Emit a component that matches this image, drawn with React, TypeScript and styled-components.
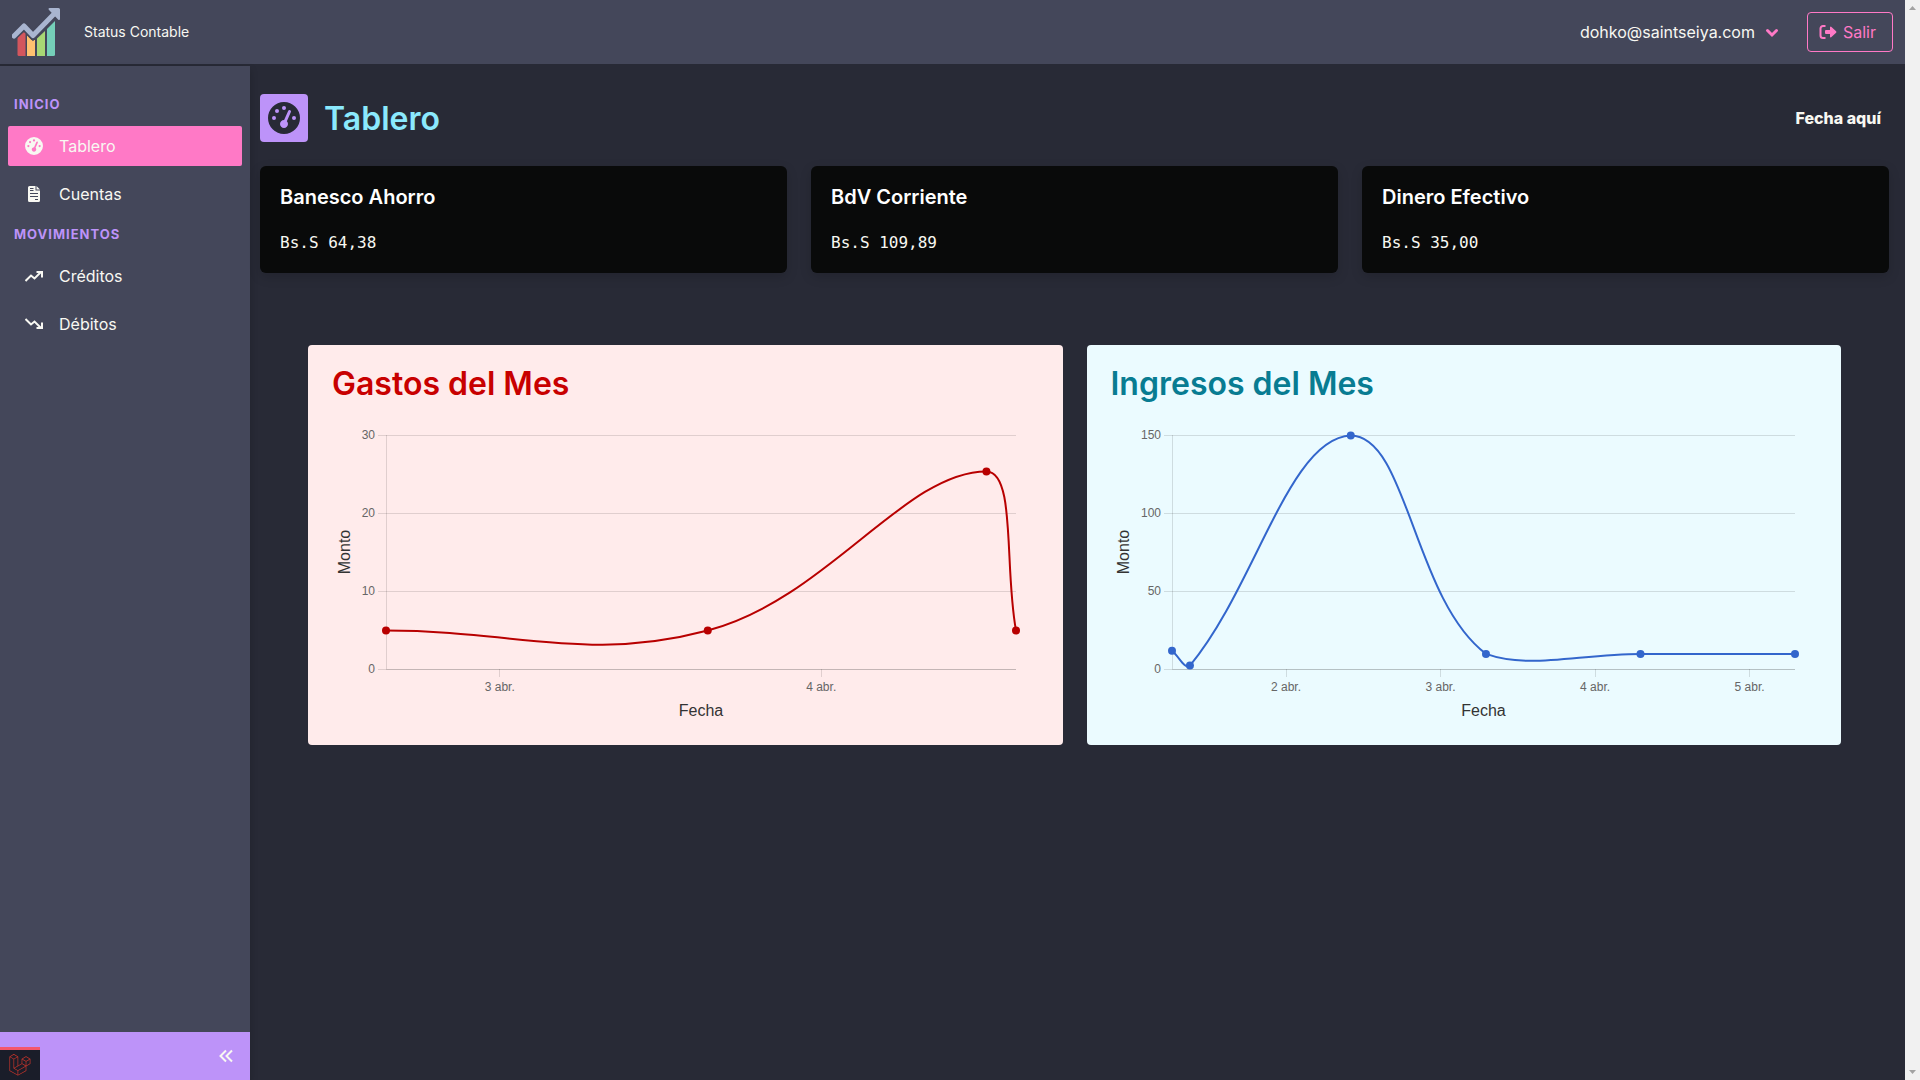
import React, { useLayoutEffect, useRef, useState } from "react";
import styled, { createGlobalStyle } from "styled-components";

const GlobalStyle = createGlobalStyle`
  *, *::before, *::after { box-sizing: border-box; }
  html, body { margin: 0; background: #282a36; }
  body { font-family: Inter, "Open Sans", sans-serif; font-size: 16px; line-height: 24px; color: #f8f8f2; }
  h1, h2, h3, p { margin: 0; }
  button { font: inherit; color: inherit; background: none; border: 0; padding: 0; cursor: pointer; }
  a { color: inherit; text-decoration: none; }
  svg { display: block; }
`;

const Screen = styled.div`
  display: flex;
  min-height: 100vh;
`;

const Page = styled.div`
  flex: 1;
  min-width: 0;
  display: flex;
  flex-direction: column;
`;

const Header = styled.header`
  display: flex;
  align-items: center;
  justify-content: space-between;
  height: 64px;
  padding: 0 12px;
  background: #44475a;
`;

const Brand = styled.a`
  display: flex;
  align-items: center;
  gap: 24px;
  font-size: 14px;
  line-height: 20px;
`;

const Account = styled.div`
  display: flex;
  align-items: center;
  gap: 28px;
`;

const UserButton = styled.button`
  display: flex;
  align-items: center;
  gap: 10px;
  svg { color: #ff79c6; }
`;

const LogoutButton = styled.button`
  display: flex;
  align-items: center;
  gap: 6px;
  height: 40px;
  padding: 0 16px 0 11px;
  border: 1px solid #ff79c6;
  border-radius: 4px;
  color: #ff79c6;
`;

const Body = styled.div`
  flex: 1;
  display: flex;
`;

const Sidebar = styled.aside`
  width: 250px;
  flex-shrink: 0;
  margin-top: 2px;
  display: flex;
  flex-direction: column;
  background: #44475a;
  box-shadow: 0 4px 8px rgba(0, 0, 0, 0.2);
`;

const Nav = styled.nav`
  flex: 1;
  padding: 18px 8px;
`;

const NavLabel = styled.h3`
  padding: 10px 6px 12px;
  font-size: 13px;
  line-height: 20px;
  font-weight: 700;
  letter-spacing: 1px;
  text-transform: uppercase;
  color: #bd93f9;
`;

const NavList = styled.ul`
  display: flex;
  flex-direction: column;
  gap: 8px;
  margin: 0;
  padding: 0;
  list-style: none;
`;

const NavLink = styled.a<{ $active?: boolean }>`
  display: flex;
  align-items: center;
  gap: 16px;
  height: 40px;
  padding: 0 17px;
  border-radius: 2px;
  background: ${(p) => (p.$active ? "#ff79c6" : "transparent")};
`;

const SidebarFooter = styled.div`
  position: relative;
  display: flex;
  align-items: center;
  justify-content: flex-end;
  height: 48px;
  padding: 0 14px;
  background: #bd93f9;
`;

const DebugBadge = styled.button`
  position: absolute;
  left: 0;
  bottom: 0;
  display: flex;
  align-items: center;
  justify-content: center;
  width: 40px;
  height: 33px;
  border-top: 3px solid #f4576b;
  background: #1a1d29;
`;

const Main = styled.main`
  flex: 1;
  min-width: 0;
  padding: 30px 16px 0 10px;
`;

const TitleBar = styled.div`
  display: flex;
  align-items: center;
  gap: 16px;
  margin-bottom: 24px;
`;

const TitleIcon = styled.div`
  display: flex;
  align-items: center;
  justify-content: center;
  width: 48px;
  height: 48px;
  border-radius: 4px;
  background: #bd93f9;
  color: #282a36;
`;

const Title = styled.h1`
  flex: 1;
  padding-top: 2px;
  font-size: 32px;
  line-height: 46px;
  font-weight: 600;
  color: #8be9fd;
`;

const DateText = styled.strong`
  padding-right: 8px;
  font-weight: 800;
`;

const Cards = styled.section`
  display: grid;
  grid-template-columns: repeat(3, 1fr);
  gap: 24px;
`;

const Card = styled.article`
  padding: 17px 20px 18px;
  border-radius: 6px;
  background: #090a0a;
  box-shadow: 0 4px 12px rgba(0, 0, 0, 0.15);
`;

const CardTitle = styled.h2`
  margin-bottom: 20px;
  font-size: 20px;
  line-height: 28px;
  font-weight: 600;
  color: #fff;
`;

const Amount = styled.p`
  font-family: "DejaVu Sans Mono", monospace;
`;

const Charts = styled.section`
  display: grid;
  grid-template-columns: repeat(2, 1fr);
  gap: 24px;
  margin-top: 72px;
  padding: 0 48px;
`;

const Panel = styled.article<{ $background: string }>`
  min-width: 0;
  height: 400px;
  padding: 16px 24px 14px;
  border-radius: 4px;
  background: ${(p) => p.$background};
`;

const PanelTitle = styled.h2<{ $color: string }>`
  font-size: 32px;
  line-height: 46px;
  font-weight: 600;
  color: ${(p) => p.$color};
`;

const Plot = styled.svg`
  width: 100%;
  height: 324px;
  overflow: visible;
  font-family: "Liberation Sans", Arial, sans-serif;
`;

const TickText = styled.text`
  font-size: 12px;
  fill: #666;
`;

const AxisText = styled.text`
  font-size: 16px;
  fill: #333;
  text-anchor: middle;
`;

const ScrollTrack = styled.div`
  display: flex;
  flex-direction: column;
  justify-content: space-between;
  align-items: center;
  width: 15px;
  padding: 6px 0;
  background: #f1f1f1;
`;

type Point = { x: number; y: number };

type ChartData = {
  title: string;
  background: string;
  titleColor: string;
  lineColor: string;
  axisLeft: number;
  yTicks: number[];
  xTicks: number[];
  /** [day of April, amount] */
  values: [number, number][];
};

const TOP = 28;
const BOTTOM = 262;
const TENSION = 0.4;

function splinePath(points: Point[], left: number, right: number) {
  const clamp = (v: number, a: number, b: number) => Math.max(a, Math.min(b, v));
  const controls = points.map((cur, i) => {
    const prev = points[i - 1] ?? cur;
    const next = points[i + 1] ?? cur;
    const before = Math.hypot(cur.x - prev.x, cur.y - prev.y);
    const after = Math.hypot(next.x - cur.x, next.y - cur.y);
    const a = (TENSION * before) / (before + after);
    const b = (TENSION * after) / (before + after);
    const fit = (p: Point) => ({ x: clamp(p.x, left, right), y: clamp(p.y, TOP, BOTTOM) });
    return {
      back: fit({ x: cur.x - a * (next.x - prev.x), y: cur.y - a * (next.y - prev.y) }),
      ahead: fit({ x: cur.x + b * (next.x - prev.x), y: cur.y + b * (next.y - prev.y) }),
    };
  });
  return points
    .map((p, i) =>
      i === 0
        ? `M${p.x} ${p.y}`
        : `C${controls[i - 1].ahead.x} ${controls[i - 1].ahead.y} ${controls[i].back.x} ${controls[i].back.y} ${p.x} ${p.y}`
    )
    .join(" ");
}

function LineChart({ data }: { data: ChartData }) {
  const ref = useRef<SVGSVGElement>(null);
  const [width, setWidth] = useState(706);

  useLayoutEffect(() => {
    const node = ref.current;
    if (!node) return;
    const measure = () => setWidth(Math.round(node.getBoundingClientRect().width));
    measure();
    const observer = new ResizeObserver(measure);
    observer.observe(node);
    return () => observer.disconnect();
  }, []);

  const left = data.axisLeft;
  const right = width - 23;
  const firstDay = data.values[0][0];
  const lastDay = data.values[data.values.length - 1][0];
  const maxY = data.yTicks[data.yTicks.length - 1];
  const scaleX = (d: number) => left + ((d - firstDay) / (lastDay - firstDay)) * (right - left);
  const scaleY = (v: number) => BOTTOM - (v / maxY) * (BOTTOM - TOP);
  const points = data.values.map(([d, v]) => ({ x: scaleX(d), y: scaleY(v) }));
  const middle = (left + right) / 2;

  return (
    <Plot ref={ref} role="img" aria-label={data.title}>
      <g stroke="#000" strokeOpacity={0.12} shapeRendering="crispEdges">
        <line x1={left} x2={left} y1={TOP} y2={BOTTOM} />
        {data.yTicks.map((t) => (
          <line key={t} x1={left - 8} x2={right} y1={scaleY(t)} y2={scaleY(t)} />
        ))}
        <line x1={left} x2={right} y1={BOTTOM} y2={BOTTOM} />
        {data.xTicks.map((t) => (
          <line key={t} x1={scaleX(t)} x2={scaleX(t)} y1={BOTTOM} y2={BOTTOM + 8} />
        ))}
      </g>
      {data.yTicks.map((t) => (
        <TickText key={t} x={left - 11} y={scaleY(t) + 4} textAnchor="end">
          {t}
        </TickText>
      ))}
      {data.xTicks.map((t) => (
        <TickText key={t} x={scaleX(t)} y={BOTTOM + 22} textAnchor="middle">
          {`${t} abr.`}
        </TickText>
      ))}
      <AxisText x={middle} y={BOTTOM + 47}>
        Fecha
      </AxisText>
      <AxisText transform={`translate(18 ${(TOP + BOTTOM) / 2}) rotate(-90)`}>Monto</AxisText>
      <g transform="translate(0 0.5)">
        <path d={splinePath(points, left, right)} fill="none" stroke={data.lineColor} strokeWidth={2} />
        {points.map((p, i) => (
          <circle key={i} cx={p.x} cy={p.y} r={4} fill={data.lineColor} />
        ))}
      </g>
    </Plot>
  );
}

function LogoIcon() {
  return (
    <svg width="48" height="48" viewBox="0 0 48 48" aria-hidden="true">
      <path d="M5.500 29.500L12 24l1.500 1.500V48H7a1.500 1.500 0 0 1-1.500-1.500z" fill="#d3565d" />
      <path d="M15 27.500L19.500 32H23V48H15z" fill="#ffc170" />
      <path d="M25 30.500L33 23V48H25z" fill="#a8d774" />
      <path d="M35 21L43 13V46.500a1.500 1.500 0 0 1-1.500 1.500H35z" fill="#75cfb8" />
      <path d="M2 28L12 18L21 27.500L42 6" fill="none" stroke="#44475a" strokeWidth="8" />
      <path d="M2 28L12 18L21 27.500L42 6" fill="none" stroke="#a9b5d0" strokeWidth="5" strokeLinecap="round" strokeLinejoin="round" />
      <path d="M37.500 0H46.500a1.500 1.500 0 0 1 1.500 1.500V11a1 1 0 0 1-1.700.7L36.800 1.700A1 1 0 0 1 37.500 0z" fill="#a9b5d0" />
    </svg>
  );
}

function GaugeIcon({ size }: { size: number }) {
  return (
    <svg width={size} height={size} viewBox="0 0 512 512" fill="currentColor" aria-hidden="true">
      <path d="M0 256a256 256 0 1 1 512 0A256 256 0 1 1 0 256zM288 96a32 32 0 1 0-64 0 32 32 0 1 0 64 0zM256 416c35.300 0 64-28.700 64-64c0-17.400-6.900-33.100-18.100-44.600L366 161.700c5.300-12.100-.2-26.300-12.300-31.600s-26.300 .2-31.600 12.300L257.900 288c-.6 0-1.300 0-1.900 0c-35.300 0-64 28.700-64 64s28.700 64 64 64zM176 144a32 32 0 1 0-64 0 32 32 0 1 0 64 0zM96 288a32 32 0 1 0 0-64 32 32 0 1 0 0 64zm352-32a32 32 0 1 0-64 0 32 32 0 1 0 64 0z" />
    </svg>
  );
}

function InvoiceIcon() {
  return (
    <svg width="18" height="16" viewBox="0 0 18 16" aria-hidden="true">
      <path d="M4.500 0H10.500V4.500H15V14.500A1.500 1.500 0 0 1 13.500 16h-9A1.500 1.500 0 0 1 3 14.500v-13A1.500 1.500 0 0 1 4.500 0zM11.500 0L15 3.500H11.500z" fill="currentColor" />
      <path d="M5 2.500h3.500M5 4.500h3.500M5 7.500h8M5 10.500h8M10 13.500h3" stroke="#44475a" fill="none" />
    </svg>
  );
}

function TrendIcon({ down }: { down?: boolean }) {
  return (
    <svg width="18" height="18" viewBox="0 0 18 18" fill="none" stroke="currentColor" strokeWidth="2" aria-hidden="true">
      {down ? <path d="M.5 4L6 9.500L9.500 6.500L16 13M11.500 13H17V7.500" /> : <path d="M.5 14L6 8.500L9.500 11.500L16 5M11.500 5H17V10.500" />}
    </svg>
  );
}

function ChevronIcon() {
  return (
    <svg width="14" height="14" viewBox="0 0 14 14" fill="none" stroke="currentColor" strokeWidth="3" strokeLinecap="round" aria-hidden="true">
      <path d="M2.500 5.500L7 10l4.500-4.500" />
    </svg>
  );
}

function LogoutIcon() {
  return (
    <svg width="18" height="16" viewBox="0 0 18 16" aria-hidden="true">
      <path d="M6.500 2H4a2.500 2.500 0 0 0-2.500 2.500v7A2.500 2.500 0 0 0 4 14h2.500" fill="none" stroke="currentColor" strokeWidth="2" />
      <path d="M11 3.300a.7.7 0 0 1 1.200-.5l4.900 4.500a1 1 0 0 1 0 1.400l-4.900 4.500a.7.7 0 0 1-1.200-.5V10H7a1 1 0 0 1-1-1V7a1 1 0 0 1 1-1h4z" fill="currentColor" />
    </svg>
  );
}

function CollapseIcon() {
  return (
    <svg width="20" height="20" viewBox="0 0 20 20" fill="none" stroke="#f8f8f2" strokeWidth="2" aria-hidden="true">
      <path d="M10 4.500L4.500 10l5.500 5.500M16 4.500L10.500 10l5.500 5.500" />
    </svg>
  );
}

function LaravelIcon() {
  return (
    <svg width="22" height="22" viewBox="0 0 50 52" fill="#c8352b" aria-hidden="true">
      <path d="M49.626 11.564a.809.809 0 0 1 .028.209v10.972a.8.800 0 0 1-.402.694l-9.209 5.302V39.250c0 .286-.152.550-.4.694L20.420 51.010c-.044.025-.092.041-.14.058a.805.805 0 0 1-.41 0c-.063-.022-.12-.04-.175-.070L.402 39.944A.801.801 0 0 1 0 39.250V6.334c0-.072.010-.142.028-.21.080-.250.200-.390.370-.490L10.010.100a.802.802 0 0 1 .800 0l9.610 5.540c.250.140.400.400.402.694v20.559l8.008-4.611V11.773c0-.270.150-.550.402-.694l9.610-5.534a.802.802 0 0 1 .800 0l9.610 5.533c.190.110.320.280.374.486zm-1.574 10.718v-9.124l-3.363 1.936-4.646 2.675v9.124l8.010-4.611zm-9.610 16.505v-9.130l-4.570 2.610-13.050 7.448v9.216l17.620-10.144zM1.602 7.719v31.068L19.220 48.930v-9.214l-9.204-5.209c-.250-.150-.410-.400-.410-.704V12.330L4.965 9.654 1.602 7.720zm8.810-5.994L2.405 6.334l8.005 4.609 8.006-4.610-8.006-4.608zm4.164 28.764l4.645-2.674V7.719l-3.363 1.936-4.646 2.675v20.096l3.364-1.937zM39.243 7.164l-8.006 4.609 8.006 4.609 8.005-4.610-8.005-4.608zm-.801 10.605l-4.646-2.675-3.363-1.936v9.124l4.645 2.674 3.364 1.937v-9.124zM20.020 38.330l11.743-6.704 5.870-3.350-8-4.606-9.211 5.303-8.395 4.833 7.993 4.524z" />
    </svg>
  );
}

const accounts = [
  { name: "Banesco Ahorro", amount: "Bs.S 64,38" },
  { name: "BdV Corriente", amount: "Bs.S 109,89" },
  { name: "Dinero Efectivo", amount: "Bs.S 35,00" },
];

const menu = [
  {
    label: "Inicio",
    items: [
      { text: "Tablero", icon: <GaugeIcon size={18} />, active: true },
      { text: "Cuentas", icon: <InvoiceIcon />, active: false },
    ],
  },
  {
    label: "Movimientos",
    items: [
      { text: "Créditos", icon: <TrendIcon />, active: false },
      { text: "Débitos", icon: <TrendIcon down />, active: false },
    ],
  },
];

const charts: ChartData[] = [
  {
    title: "Gastos del Mes",
    background: "#ffebeb",
    titleColor: "#c80000",
    lineColor: "#b80000",
    axisLeft: 54,
    yTicks: [0, 10, 20, 30],
    xTicks: [3, 4],
    values: [[2.646, 5], [3.647, 5], [4.514, 25.4], [4.606, 5]],
  },
  {
    title: "Ingresos del Mes",
    background: "#ebfbff",
    titleColor: "#087c92",
    lineColor: "#3366cc",
    axisLeft: 61,
    yTicks: [0, 50, 100, 150],
    xTicks: [2, 3, 4, 5],
    values: [[1.262, 12], [1.378, 2.5], [2.419, 150], [3.294, 10], [4.294, 10], [5.294, 10]],
  },
];

export default function App() {
  return (
    <>
      <GlobalStyle />
      <Screen>
        <Page>
          <Header>
            <Brand href="#">
              <LogoIcon />
              Status Contable
            </Brand>
            <Account>
              <UserButton type="button">
                dohko@saintseiya.com
                <ChevronIcon />
              </UserButton>
              <LogoutButton type="button">
                <LogoutIcon />
                Salir
              </LogoutButton>
            </Account>
          </Header>
          <Body>
            <Sidebar>
              <Nav>
                {menu.map((group) => (
                  <React.Fragment key={group.label}>
                    <NavLabel>{group.label}</NavLabel>
                    <NavList>
                      {group.items.map((item) => (
                        <li key={item.text}>
                          <NavLink href="#" $active={item.active}>
                            {item.icon}
                            {item.text}
                          </NavLink>
                        </li>
                      ))}
                    </NavList>
                  </React.Fragment>
                ))}
              </Nav>
              <SidebarFooter>
                <DebugBadge type="button" aria-label="Laravel">
                  <LaravelIcon />
                </DebugBadge>
                <button type="button" aria-label="Contraer menú">
                  <CollapseIcon />
                </button>
              </SidebarFooter>
            </Sidebar>
            <Main>
              <TitleBar>
                <TitleIcon>
                  <GaugeIcon size={32} />
                </TitleIcon>
                <Title>Tablero</Title>
                <DateText>Fecha aquí</DateText>
              </TitleBar>
              <Cards>
                {accounts.map((a) => (
                  <Card key={a.name}>
                    <CardTitle>{a.name}</CardTitle>
                    <Amount>{a.amount}</Amount>
                  </Card>
                ))}
              </Cards>
              <Charts>
                {charts.map((c) => (
                  <Panel key={c.title} $background={c.background}>
                    <PanelTitle $color={c.titleColor}>{c.title}</PanelTitle>
                    <LineChart data={c} />
                  </Panel>
                ))}
              </Charts>
            </Main>
          </Body>
        </Page>
        <ScrollTrack aria-hidden="true">
          <svg width="7" height="4" viewBox="0 0 7 4"><path d="M0 4L3.500 0L7 4z" fill="#a3a3a3" /></svg>
          <svg width="7" height="4" viewBox="0 0 7 4"><path d="M0 0L3.500 4L7 0z" fill="#a3a3a3" /></svg>
        </ScrollTrack>
      </Screen>
    </>
  );
}
